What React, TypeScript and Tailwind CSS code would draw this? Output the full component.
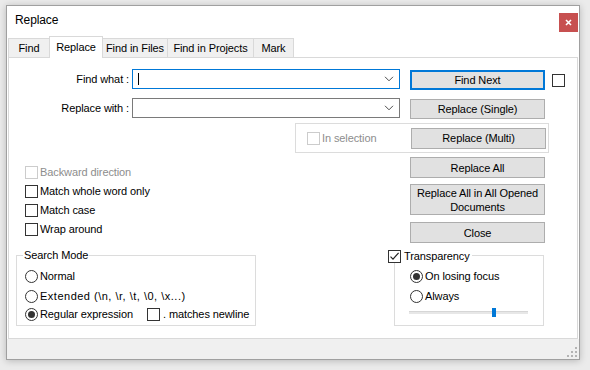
import React from "react";

function Box({ checked = false, disabled = false }: { checked?: boolean; disabled?: boolean }) {
  return (
    <span
      className={
        disabled
          ? "w-[13px] h-[13px] shrink-0 border border-[#cccccc] bg-white"
          : "w-[13px] h-[13px] shrink-0 border border-[#333333] bg-white flex items-center justify-center"
      }
    >
      {checked ? (
        <svg width="11" height="11" viewBox="0 0 11 11">
          <path d="M1.5 5.6 L4 8.2 L9.6 1.8" fill="none" stroke="#222222" strokeWidth="1.2" />
        </svg>
      ) : null}
    </span>
  );
}

function Radio({ checked = false }: { checked?: boolean }) {
  return (
    <span className="w-[13px] h-[13px] shrink-0 rounded-full border border-[#333333] bg-white flex items-center justify-center">
      {checked ? <span className="w-[7px] h-[7px] rounded-full bg-[#333333]" /> : null}
    </span>
  );
}

function Btn({ children, className = "" }: { children: React.ReactNode; className?: string }) {
  return (
    <div
      className={
        "w-[135px] shrink-0 border border-[#adadad] bg-[#e1e1e1] flex items-center justify-center text-center leading-[14px] " +
        className
      }
    >
      {children}
    </div>
  );
}

function Chevron() {
  return (
    <svg width="10" height="6" viewBox="0 0 10 6" className="ml-auto mr-[5px]">
      <path d="M1 0.8 L5 4.8 L9 0.8" fill="none" stroke="#4d4d4d" strokeWidth="1" />
    </svg>
  );
}

function Tab({ label, width, selected = false, first = false }: { label: string; width: string; selected?: boolean; first?: boolean }) {
  const base = selected
    ? "h-[22px] -mb-px relative z-10 bg-white border-t border-l border-r border-[#d9d9d9] flex items-center justify-center "
    : "h-[19px] bg-[#f0f0f0] border-t border-l border-r border-[#d9d9d9] flex items-center justify-center ";
  return <div className={base + width + (first ? "" : " -ml-px")}>{label}</div>;
}

export default function App() {
  return (
    <div className="w-[590px] h-[370px] bg-[#ebebeb] pl-[6px] pt-[5px] overflow-hidden font-['Liberation_Sans',Arial,sans-serif] text-[11px] tracking-[-0.1px] text-black">
      <div className="w-[574px] h-[355px] border border-[#a0a0a0] bg-white flex flex-col shadow-[0_1px_7px_rgba(0,0,0,0.22)]">
        {/* Title bar */}
        <div className="h-[30px] flex items-start shrink-0">
          <span className="ml-[8px] mt-[7px] text-[12px] leading-[14px]">Replace</span>
          <div className="ml-auto mr-[1px] mt-[7px] w-[19px] h-[19px] bg-[#c75050] flex items-center justify-center">
            <svg width="7" height="7" viewBox="0 0 7 7">
              <path d="M1 1 L6 6 M6 1 L1 6" stroke="#ffffff" strokeWidth="1.6" />
            </svg>
          </div>
        </div>

        {/* Tabs */}
        <div className="h-[21px] flex items-end pl-[1px] shrink-0">
          <Tab label="Find" width="w-[42px]" first />
          <Tab label="Replace" width="w-[54px]" selected />
          <Tab label="Find in Files" width="w-[66px]" />
          <Tab label="Find in Projects" width="w-[87px]" />
          <Tab label="Mark" width="w-[41px]" />
        </div>

        {/* Panel */}
        <div className="mx-[1px] h-[282px] shrink-0 border border-[#d9d9d9] flex flex-col">
          {/* Row 1 */}
          <div className="mt-[11px] flex items-start">
            <div className="w-[120px] h-[20px] flex items-center justify-end">Find what :</div>
            <div className="ml-[3px] w-[268px] h-[20px] border border-[#0078d7] bg-white flex items-center">
              <span className="ml-[5px] w-px h-[12px] bg-black" />
              <Chevron />
            </div>
            <div className="ml-[10px] mt-[1px] w-[135px] h-[20px] border-2 border-[#0078d7] bg-[#e1e1e1] flex items-center justify-center">
              Find Next
            </div>
            <div className="ml-[7px] mt-[5px]">
              <Box />
            </div>
          </div>

          {/* Row 2 */}
          <div className="mt-[8px] flex items-start">
            <div className="w-[120px] h-[20px] flex items-center justify-end">Replace with :</div>
            <div className="ml-[3px] w-[268px] h-[20px] border border-[#7a7a7a] bg-white flex items-center">
              <Chevron />
            </div>
            <Btn className="ml-[10px] mt-[1px] h-[20px]">Replace (Single)</Btn>
          </div>

          {/* Row 3: In selection group */}
          <div className="mt-[4px] ml-[286px] w-[254px] h-[30px] border border-[#dcdcdc] flex items-center pl-[11px]">
            <Box disabled />
            <span className="ml-[2px] text-[#8d8d8d]">In selection</span>
            <Btn className="ml-auto mr-[2px] h-[21px]">Replace (Multi)</Btn>
          </div>

          {/* Lower section */}
          <div className="flex">
            {/* Left column */}
            <div className="w-[379px] pt-[10px] flex flex-col">
              <div className="h-[19px] pl-[16px] flex items-center">
                <Box disabled />
                <span className="ml-[2px] text-[#8d8d8d]">Backward direction</span>
              </div>
              <div className="h-[19px] pl-[16px] flex items-center">
                <Box />
                <span className="ml-[2px]">Match whole word only</span>
              </div>
              <div className="h-[19px] pl-[16px] flex items-center">
                <Box />
                <span className="ml-[2px]">Match case</span>
              </div>
              <div className="h-[19px] pl-[16px] flex items-center">
                <Box />
                <span className="ml-[2px]">Wrap around</span>
              </div>

              {/* Search Mode group */}
              <div className="mt-[16px] ml-[7px] w-[240px] h-[71px] border border-[#dcdcdc] flex flex-col">
                <div className="-mt-[8px] ml-[6px] self-start bg-white px-[1px] leading-[15px]">Search Mode</div>
                <div className="mt-[3px] h-[20px] pl-[8px] flex items-center">
                  <Radio />
                  <span className="ml-[2px]">Normal</span>
                </div>
                <div className="h-[20px] pl-[8px] flex items-center">
                  <Radio />
                  <span className="ml-[2px] tracking-[0.5px]">Extended (\n, \r, \t, \0, \x...)</span>
                </div>
                <div className="-mt-[2px] h-[20px] pl-[8px] flex items-center">
                  <div className="w-[122px] flex items-center">
                    <Radio checked />
                    <span className="ml-[2px]">Regular expression</span>
                  </div>
                  <Box />
                  <span className="ml-[3px]">. matches newline</span>
                </div>
              </div>
            </div>

            {/* Right column */}
            <div className="flex-1 pt-[4px] flex flex-col">
              <Btn className="ml-[22px] h-[21px]">Replace All</Btn>
              <Btn className="ml-[22px] mt-[6px] h-[31px]">
                Replace All in All Opened
                <br />
                Documents
              </Btn>
              <Btn className="ml-[22px] mt-[7px] h-[21px]">Close</Btn>

              {/* Transparency group */}
              <div className="mt-[12px] ml-[6px] w-[150px] h-[71px] border border-[#dcdcdc] flex flex-col">
                <div className="-mt-[7px] -ml-[7px] self-start flex items-center">
                  <Box checked />
                  <span className="bg-white pl-[3px] pr-[2px] leading-[15px]">Transparency</span>
                </div>
                <div className="mt-[2px] h-[20px] pl-[15px] flex items-center">
                  <Radio checked />
                  <span className="ml-[2px]">On losing focus</span>
                </div>
                <div className="h-[20px] pl-[15px] flex items-center">
                  <Radio />
                  <span className="ml-[2px]">Always</span>
                </div>
                <div className="mt-[5px] ml-[14px] w-[119px] h-[3px] bg-[#e7e7e7] border-t border-[#d6d6d6] relative">
                  <div className="absolute left-[83px] -top-[4px] w-[4px] h-[9px] bg-[#0078d7]" />
                </div>
              </div>
            </div>
          </div>
        </div>

        {/* Footer */}
        <div className="flex-1 bg-[#f0f0f0] flex items-end justify-end">
          <svg width="11" height="11" viewBox="0 0 11 11" className="mr-[1px] mb-[1px]">
            <rect x="8" y="0" width="2" height="2" fill="#b4b4b4" />
            <rect x="4" y="4" width="2" height="2" fill="#b4b4b4" />
            <rect x="8" y="4" width="2" height="2" fill="#b4b4b4" />
            <rect x="0" y="8" width="2" height="2" fill="#b4b4b4" />
            <rect x="4" y="8" width="2" height="2" fill="#b4b4b4" />
            <rect x="8" y="8" width="2" height="2" fill="#b4b4b4" />
          </svg>
        </div>
      </div>
    </div>
  );
}
